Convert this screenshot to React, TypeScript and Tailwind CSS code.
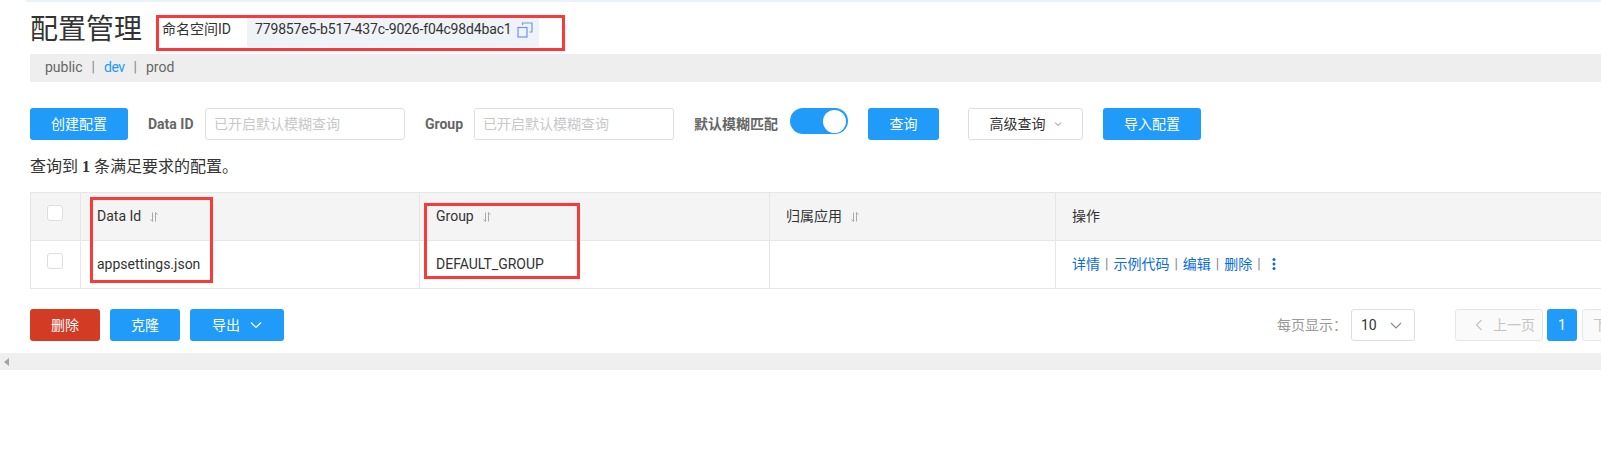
import React from "react";

const font = "font-['Roboto','Noto_Sans_CJK_SC',sans-serif]";

function SortIcon() {
  return (
    <svg width="10" height="12" viewBox="0 0 10 12" className="ml-[8px] mt-[2px]" fill="none" stroke="#a9a9a9" strokeWidth="1">
      <path d="M3.5 1.5V10.5M1.5 8.5L3.5 10.5" />
      <path d="M6.5 10.5V1.5M6.5 1.5L8.5 3.5" />
    </svg>
  );
}

function Check() {
  return <div className="w-[16px] h-[16px] mr-[2px] rounded-[3px] border border-[#dcdee3] bg-white" />;
}

function Btn({ w, children, cls = "bg-[#209bfa] text-white" }: { w: string; children: React.ReactNode; cls?: string }) {
  return <div className={`${w} ${cls} shrink-0 h-[32px] rounded-[3px] flex items-center justify-center text-[14px]`}>{children}</div>;
}

function Input({ w }: { w: string }) {
  return (
    <div className={`${w} shrink-0 h-[32px] rounded-[3px] border border-[#dcdee3] bg-white flex items-center pl-[8px] text-[14px] text-[#c8c8c8]`}>
      已开启默认模糊查询
    </div>
  );
}

function Sep() {
  return <span className="mx-[5px] text-[#888]">|</span>;
}

export default function App() {
  return (
    <div className={`${font} relative w-[1601px] h-[454px] overflow-hidden bg-white text-[#333]`}>
      <div className="ml-[26px] h-[2px] bg-[#e8f2fb]" />
      <div className="flex items-start ml-[30px] h-[52px]">
        <h1 className="text-[28px] leading-[40px] mt-[8px] font-normal text-[#333] w-[128px] shrink-0">配置管理</h1>
        <div className="relative flex items-start mt-[16px]">
          <span className="ml-[4px] text-[14px] leading-[22px] w-[85px] text-[#333]">命名空间ID</span>
          <div className="w-[292px] h-[29px] bg-[#eff3f8] flex items-center pl-[8px] pb-[6px] text-[14px] tracking-[-0.15px] text-[#333] gap-[5px]">
            <span>779857e5-b517-437c-9026-f04c98d4bac1</span>
            <svg width="16" height="16" viewBox="0 0 16 16" fill="none" stroke="#6c97ee" strokeWidth="1.2">
              <rect x="1" y="5.5" width="9" height="9.5" />
              <path d="M5.5 3V1H15V10H12.5" />
            </svg>
          </div>
        </div>
      </div>
      <div className="ml-[30px] h-[28px] bg-[#eeeeee] flex items-center pl-[15px] pb-[2px] text-[14px] text-[#666]">
        <span>public</span>
        <span className="ml-[9px] mr-[9px] text-[#888]">|</span>
        <span className="text-[#209bfa] tracking-[-0.5px]">dev</span>
        <span className="ml-[9px] mr-[9px] text-[#888]">|</span>
        <span>prod</span>
      </div>

      <div className="flex items-center ml-[30px] mt-[26px] h-[32px]">
        <Btn w="w-[98px]">创建配置</Btn>
        <span className="ml-[20px] w-[57px] text-[14px] font-bold text-[#666]">Data ID</span>
        <Input w="w-[200px]" />
        <span className="ml-[20px] w-[49px] text-[14px] font-bold text-[#666]">Group</span>
        <Input w="w-[200px]" />
        <span className="ml-[20px] w-[96px] text-[14px] font-bold text-[#666]">默认模糊匹配</span>
        <div className="w-[58px] h-[26px] mb-[6px] rounded-full bg-[#209bfa] flex items-center justify-end pr-[2px]">
          <div className="w-[23px] h-[23px] rounded-full bg-white" />
        </div>
        <Btn w="w-[71px] ml-[20px]">查询</Btn>
        <Btn w="w-[115px] ml-[29px]" cls="bg-white border border-[#dcdee3] text-[#333]">
          高级查询
          <svg width="8" height="8" viewBox="0 0 8 8" className="ml-[8px]" fill="none" stroke="#888" strokeWidth="1">
            <path d="M1 2.5L4 5.5L7 2.5" />
          </svg>
        </Btn>
        <Btn w="w-[98px] ml-[20px]">导入配置</Btn>
      </div>

      <div className="ml-[30px] mt-[15px] h-[24px] leading-[24px] text-[16px] text-[#333]">
        查询到 <strong className="font-['Liberation_Serif',serif] text-[16px]">1</strong> 条满足要求的配置。
      </div>

      <div className="ml-[30px] mt-[13px] w-[1640px] border border-[#e6e6e6] text-[14px] text-[#333]">
        <div className="flex h-[48px] bg-[#f4f4f4] border-b border-[#e6e6e6]">
          <div className="w-[50px] shrink-0 border-r border-[#e6e6e6] flex justify-center pt-[12px]"><Check /></div>
          <div className="w-[339px] shrink-0 border-r border-[#e6e6e6] flex items-center pl-[16px] pb-[1px]">Data Id<SortIcon /></div>
          <div className="w-[350px] shrink-0 border-r border-[#e6e6e6] flex items-center pl-[16px] pb-[1px]">Group<SortIcon /></div>
          <div className="w-[286px] shrink-0 border-r border-[#e6e6e6] flex items-center pl-[16px] pb-[1px]">归属应用<SortIcon /></div>
          <div className="flex-1 flex items-center pl-[16px] pb-[1px]">操作</div>
        </div>
        <div className="flex h-[47px] bg-white">
          <div className="w-[50px] shrink-0 border-r border-[#e6e6e6] flex justify-center pt-[12px]"><Check /></div>
          <div className="w-[339px] shrink-0 border-r border-[#e6e6e6] flex items-center pl-[16px]">appsettings.json</div>
          <div className="w-[350px] shrink-0 border-r border-[#e6e6e6] flex items-center pl-[16px]">DEFAULT_GROUP</div>
          <div className="w-[286px] shrink-0 border-r border-[#e6e6e6]" />
          <div className="flex-1 flex items-center pl-[16px] pb-[1px] text-[#0a6dd9]">
            <span>详情</span><Sep /><span>示例代码</span><Sep /><span>编辑</span><Sep /><span>删除</span><Sep />
            <svg width="4" height="14" viewBox="0 0 4 14" className="ml-[6px]" fill="#1a66cc">
              <circle cx="2" cy="2.5" r="1.5" /><circle cx="2" cy="7" r="1.5" /><circle cx="2" cy="11.5" r="1.5" />
            </svg>
          </div>
        </div>
      </div>

      <div className="flex items-center ml-[30px] mt-[20px] h-[32px] text-[14px]">
        <Btn w="w-[70px]" cls="bg-[#d33b25] text-white">删除</Btn>
        <Btn w="w-[70px] ml-[10px]">克隆</Btn>
        <Btn w="w-[94px] ml-[10px]">
          导出
          <svg width="12" height="8" viewBox="0 0 12 8" className="ml-[10px]" fill="none" stroke="#fff" strokeWidth="1.2">
            <path d="M1 1.5L6 6.5L11 1.5" />
          </svg>
        </Btn>
        <span className="ml-[993px] w-[74px] shrink-0 whitespace-nowrap text-[#999]">每页显示：</span>
        <div className="w-[64px] shrink-0 h-[32px] rounded-[3px] border border-[#dcdee3] flex items-center justify-between pl-[9px] pr-[12px] text-[#333]">
          10
          <svg width="12" height="7" viewBox="0 0 12 7" fill="none" stroke="#888" strokeWidth="1.1">
            <path d="M1 1L6 6L11 1" />
          </svg>
        </div>
        <div className="ml-[40px] w-[88px] shrink-0 h-[32px] rounded-[3px] border border-[#e6e6e6] bg-[#fafafa] flex items-center pl-[19px] text-[#c4c4c4]">
          <svg width="8" height="12" viewBox="0 0 8 12" className="mr-[10px]" fill="none" stroke="#c4c4c4" strokeWidth="1.2">
            <path d="M6.5 1L1.5 6L6.5 11" />
          </svg>
          上一页
        </div>
        <div className="ml-[4px] w-[30px] shrink-0 h-[32px] rounded-[3px] bg-[#209bfa] text-white flex items-center justify-center">1</div>
        <div className="ml-[5px] w-[60px] h-[32px] rounded-[3px] border border-[#e6e6e6] bg-[#fafafa] shrink-0 flex items-center pl-[10px] whitespace-nowrap text-[#c4c4c4]">下一页</div>
      </div>

      <div className="mt-[12px] h-[17px] bg-[#efefef] flex items-center pl-[4px]">
        <svg width="5" height="8" viewBox="0 0 5 8" fill="#a3a3a3"><path d="M5 0V8L0 4Z" /></svg>
      </div>

      <div className="absolute left-[156px] top-[15px] w-[409px] h-[36px] border-[3px] border-[#f93a3a]" />
      <div className="absolute left-[90px] top-[197px] w-[123px] h-[86px] border-[3px] border-[#f93a3a]" />
      <div className="absolute left-[424px] top-[203px] w-[156px] h-[76px] border-[3px] border-[#f93a3a]" />
    </div>
  );
}
